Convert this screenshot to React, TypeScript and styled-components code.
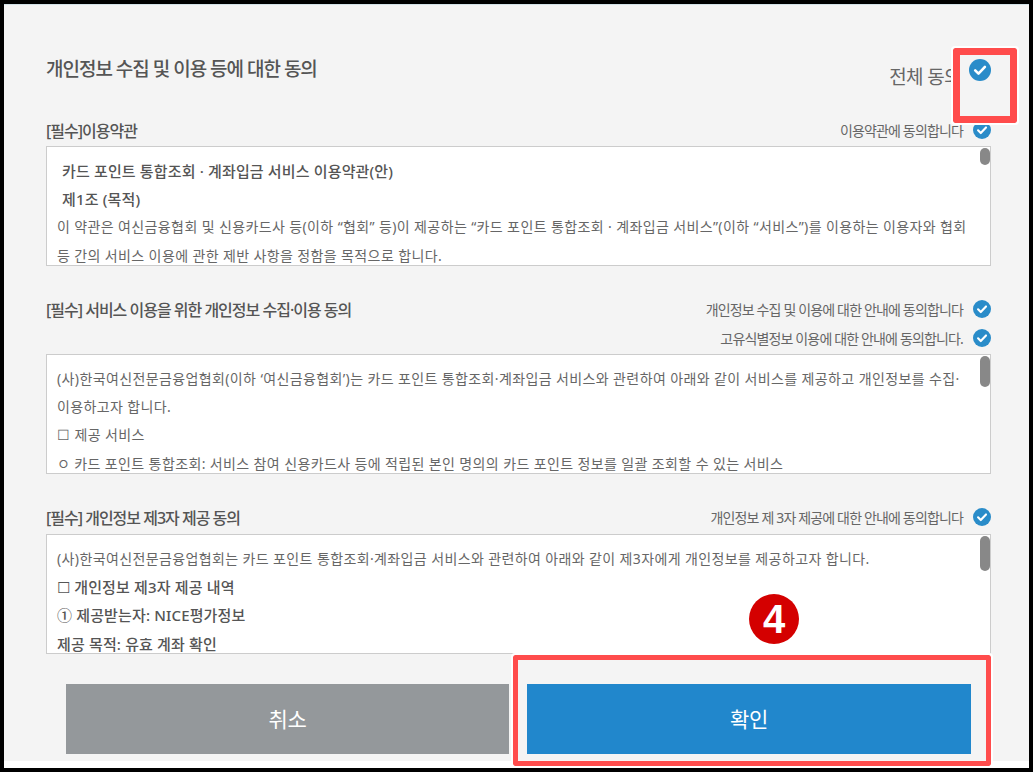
import React from 'react';
import styled, { createGlobalStyle } from 'styled-components';

const GlobalStyle = createGlobalStyle`
  html, body { margin: 0; padding: 0; background: #000; }
  body { font-family: "Noto Sans", "Noto Sans CJK KR", sans-serif; color: #666; }
`;

const Frame = styled.div`
  position: relative;
  width: 1033px;
  height: 772px;
  box-sizing: border-box;
  padding: 4px 4px 4px 4px;
  background: #000;
  overflow: hidden;
`;

const Panel = styled.div`
  box-sizing: border-box;
  height: 764px;
  padding: 0 38px 0 42px;
  background: #f4f4f4;
  border-top: 1px solid #d3e2e8;
  border-bottom: 7px solid #fff;
`;

const TopRow = styled.div`
  display: flex;
  justify-content: space-between;
  height: 115px;
`;

const Title = styled.h2`
  margin: 50px 0 0;
  font-size: 19px;
  line-height: 28px;
  font-weight: 500;
  letter-spacing: -1px;
  color: #555;
`;

const AllAgree = styled.div`
  display: flex;
  align-items: flex-start;
  gap: 8px;
  padding-top: 54px;
  font-size: 19px;
  line-height: 36px;
  letter-spacing: -0.6px;
  color: #666;
`;

const IconSlot = styled.span`
  flex: none;
  width: 22px;
`;

const Section = styled.section<{ $gap?: number }>`
  margin-top: ${props => props.$gap ?? 0}px;
`;

const SectionHeader = styled.div<{ $height: number }>`
  display: flex;
  justify-content: space-between;
  align-items: flex-start;
  height: ${props => props.$height}px;
`;

const SectionTitle = styled.h3<{ $top?: number }>`
  margin: ${props => props.$top ?? 0}px 0 0;
  font-size: 16px;
  line-height: 22px;
  font-weight: 500;
  letter-spacing: -1px;
  color: #555;
`;

const AgreeList = styled.div<{ $top?: number }>`
  display: flex;
  flex-direction: column;
  align-items: flex-end;
  gap: 11px;
  margin-top: ${props => props.$top ?? 0}px;
`;

const AgreeRow = styled.div`
  display: flex;
  align-items: center;
  justify-content: flex-end;
  gap: 10px;
  height: 18px;
  font-size: 14px;
  letter-spacing: -0.85px;
  color: #666;
`;

const TermsBox = styled.div`
  position: relative;
  box-sizing: border-box;
  height: 120px;
  padding-top: 10px;
  background: #fff;
  border: 1px solid #ccc;
  overflow: hidden;
`;

const Line = styled.p<{ $strong?: boolean; $indent?: number }>`
  margin: 0;
  padding-left: ${props => props.$indent ?? 10}px;
  font-size: ${props => (props.$strong ? 15 : 14)}px;
  line-height: 28.2px;
  font-weight: ${props => (props.$strong ? 500 : 400)};
  letter-spacing: ${props => (props.$strong ? 0.15 : 0.38)}px;
  white-space: nowrap;
  color: ${props => (props.$strong ? '#555' : '#666')};
`;

const ScrollThumb = styled.div<{ $height: number }>`
  position: absolute;
  top: 1px;
  right: 0;
  width: 10px;
  height: ${props => props.$height}px;
  border-radius: 5px;
  background: #888;
`;

const ButtonRow = styled.div`
  display: flex;
  gap: 18px;
  margin-top: 30px;
  padding: 0 20px;
`;

const ActionButton = styled.button<{ $primary?: boolean }>`
  flex: ${props => (props.$primary ? '1' : '0 0 443px')};
  height: 70px;
  padding: 0 0 3px;
  border: none;
  font-family: inherit;
  font-size: 21px;
  letter-spacing: -0.3px;
  color: #fff;
  background: ${props => (props.$primary ? '#2187cc' : '#94989b')};
`;

const Highlight = styled.div<{ $x: number; $y: number; $w: number; $h: number; $line: number }>`
  position: absolute;
  left: ${props => props.$x}px;
  top: ${props => props.$y}px;
  width: ${props => props.$w}px;
  height: ${props => props.$h}px;
  box-sizing: border-box;
  border: ${props => props.$line}px solid #ff4c4c;
  border-radius: 2px;
  outline: 2px solid #fff;
  background: ${props => (props.$line > 5 ? '#f4f4f4' : 'transparent')};
`;

const FloatCheck = styled.div`
  position: absolute;
  left: 969px;
  top: 59px;
  display: flex;
`;

const StepBadge = styled.div`
  position: absolute;
  left: 749px;
  top: 594px;
  display: flex;
  align-items: center;
  justify-content: center;
  width: 50px;
  height: 50px;
  border-radius: 50%;
  background: #d40000;
  color: #fff;
  font-family: "Liberation Sans", sans-serif;
  font-size: 40px;
  font-weight: 700;
`;

const CheckIcon: React.FC<{ size: number }> = ({ size }) => (
  <svg width={size} height={size} viewBox="0 0 22 22" style={{ flex: 'none' }}>
    <circle cx="11" cy="11" r="11" fill="#2a8cc9" />
    <path d="M6.2 11.4l3.3 3.3 6.4-6.8" fill="none" stroke="#fff" strokeWidth="2.6" strokeLinecap="round" strokeLinejoin="round" />
  </svg>
);

const App: React.FC = () => {
  return (
    <Frame>
      <GlobalStyle />
      <Panel>
        <TopRow>
          <Title>개인정보 수집 및 이용 등에 대한 동의</Title>
          <AllAgree>
            전체 동의
            <IconSlot />
          </AllAgree>
        </TopRow>

        <Section>
          <SectionHeader $height={26}>
            <SectionTitle>[필수]이용약관</SectionTitle>
            <AgreeList $top={1}>
              <AgreeRow>
                이용약관에 동의합니다
                <CheckIcon size={18} />
              </AgreeRow>
            </AgreeList>
          </SectionHeader>
          <TermsBox>
            <Line $strong $indent={15}>카드 포인트 통합조회 · 계좌입금 서비스 이용약관(안)</Line>
            <Line $strong $indent={15}>제1조 (목적)</Line>
            <Line>이 약관은 여신금융협회 및 신용카드사 등(이하 “협회” 등)이 제공하는 “카드 포인트 통합조회 · 계좌입금 서비스”(이하 “서비스”)를 이용하는 이용자와 협회</Line>
            <Line>등 간의 서비스 이용에 관한 제반 사항을 정함을 목적으로 합니다.</Line>
            <ScrollThumb $height={17} />
          </TermsBox>
        </Section>

        <Section $gap={29}>
          <SectionHeader $height={59}>
            <SectionTitle $top={4}>[필수] 서비스 이용을 위한 개인정보 수집·이용 동의</SectionTitle>
            <AgreeList $top={5}>
              <AgreeRow>
                개인정보 수집 및 이용에 대한 안내에 동의합니다
                <CheckIcon size={18} />
              </AgreeRow>
              <AgreeRow>
                고유식별정보 이용에 대한 안내에 동의합니다.
                <CheckIcon size={18} />
              </AgreeRow>
            </AgreeList>
          </SectionHeader>
          <TermsBox>
            <Line>(사)한국여신전문금융업협회(이하 ‘여신금융협회’)는 카드 포인트 통합조회·계좌입금 서비스와 관련하여 아래와 같이 서비스를 제공하고 개인정보를 수집·</Line>
            <Line>이용하고자 합니다.</Line>
            <Line>☐ 제공 서비스</Line>
            <Line>ㅇ 카드 포인트 통합조회: 서비스 참여 신용카드사 등에 적립된 본인 명의의 카드 포인트 정보를 일괄 조회할 수 있는 서비스</Line>
            <ScrollThumb $height={31} />
          </TermsBox>
        </Section>

        <Section $gap={30}>
          <SectionHeader $height={30}>
            <SectionTitle $top={3}>[필수] 개인정보 제3자 제공 동의</SectionTitle>
            <AgreeList $top={4}>
              <AgreeRow>
                개인정보 제 3자 제공에 대한 안내에 동의합니다
                <CheckIcon size={18} />
              </AgreeRow>
            </AgreeList>
          </SectionHeader>
          <TermsBox>
            <Line>(사)한국여신전문금융업협회는 카드 포인트 통합조회·계좌입금 서비스와 관련하여 아래와 같이 제3자에게 개인정보를 제공하고자 합니다.</Line>
            <Line $strong>☐ 개인정보 제3자 제공 내역</Line>
            <Line $strong>① 제공받는자: NICE평가정보</Line>
            <Line $strong>제공 목적: 유효 계좌 확인</Line>
            <ScrollThumb $height={35} />
          </TermsBox>
        </Section>

        <ButtonRow>
          <ActionButton>취소</ActionButton>
          <ActionButton $primary>확인</ActionButton>
        </ButtonRow>
      </Panel>

      <Highlight $x={953} $y={48} $w={64} $h={75} $line={7} />
      <FloatCheck>
        <CheckIcon size={22} />
      </FloatCheck>
      <Highlight $x={513} $y={655} $w={478} $h={111} $line={5} />
      <StepBadge>4</StepBadge>
    </Frame>
  );
};

export default App;
